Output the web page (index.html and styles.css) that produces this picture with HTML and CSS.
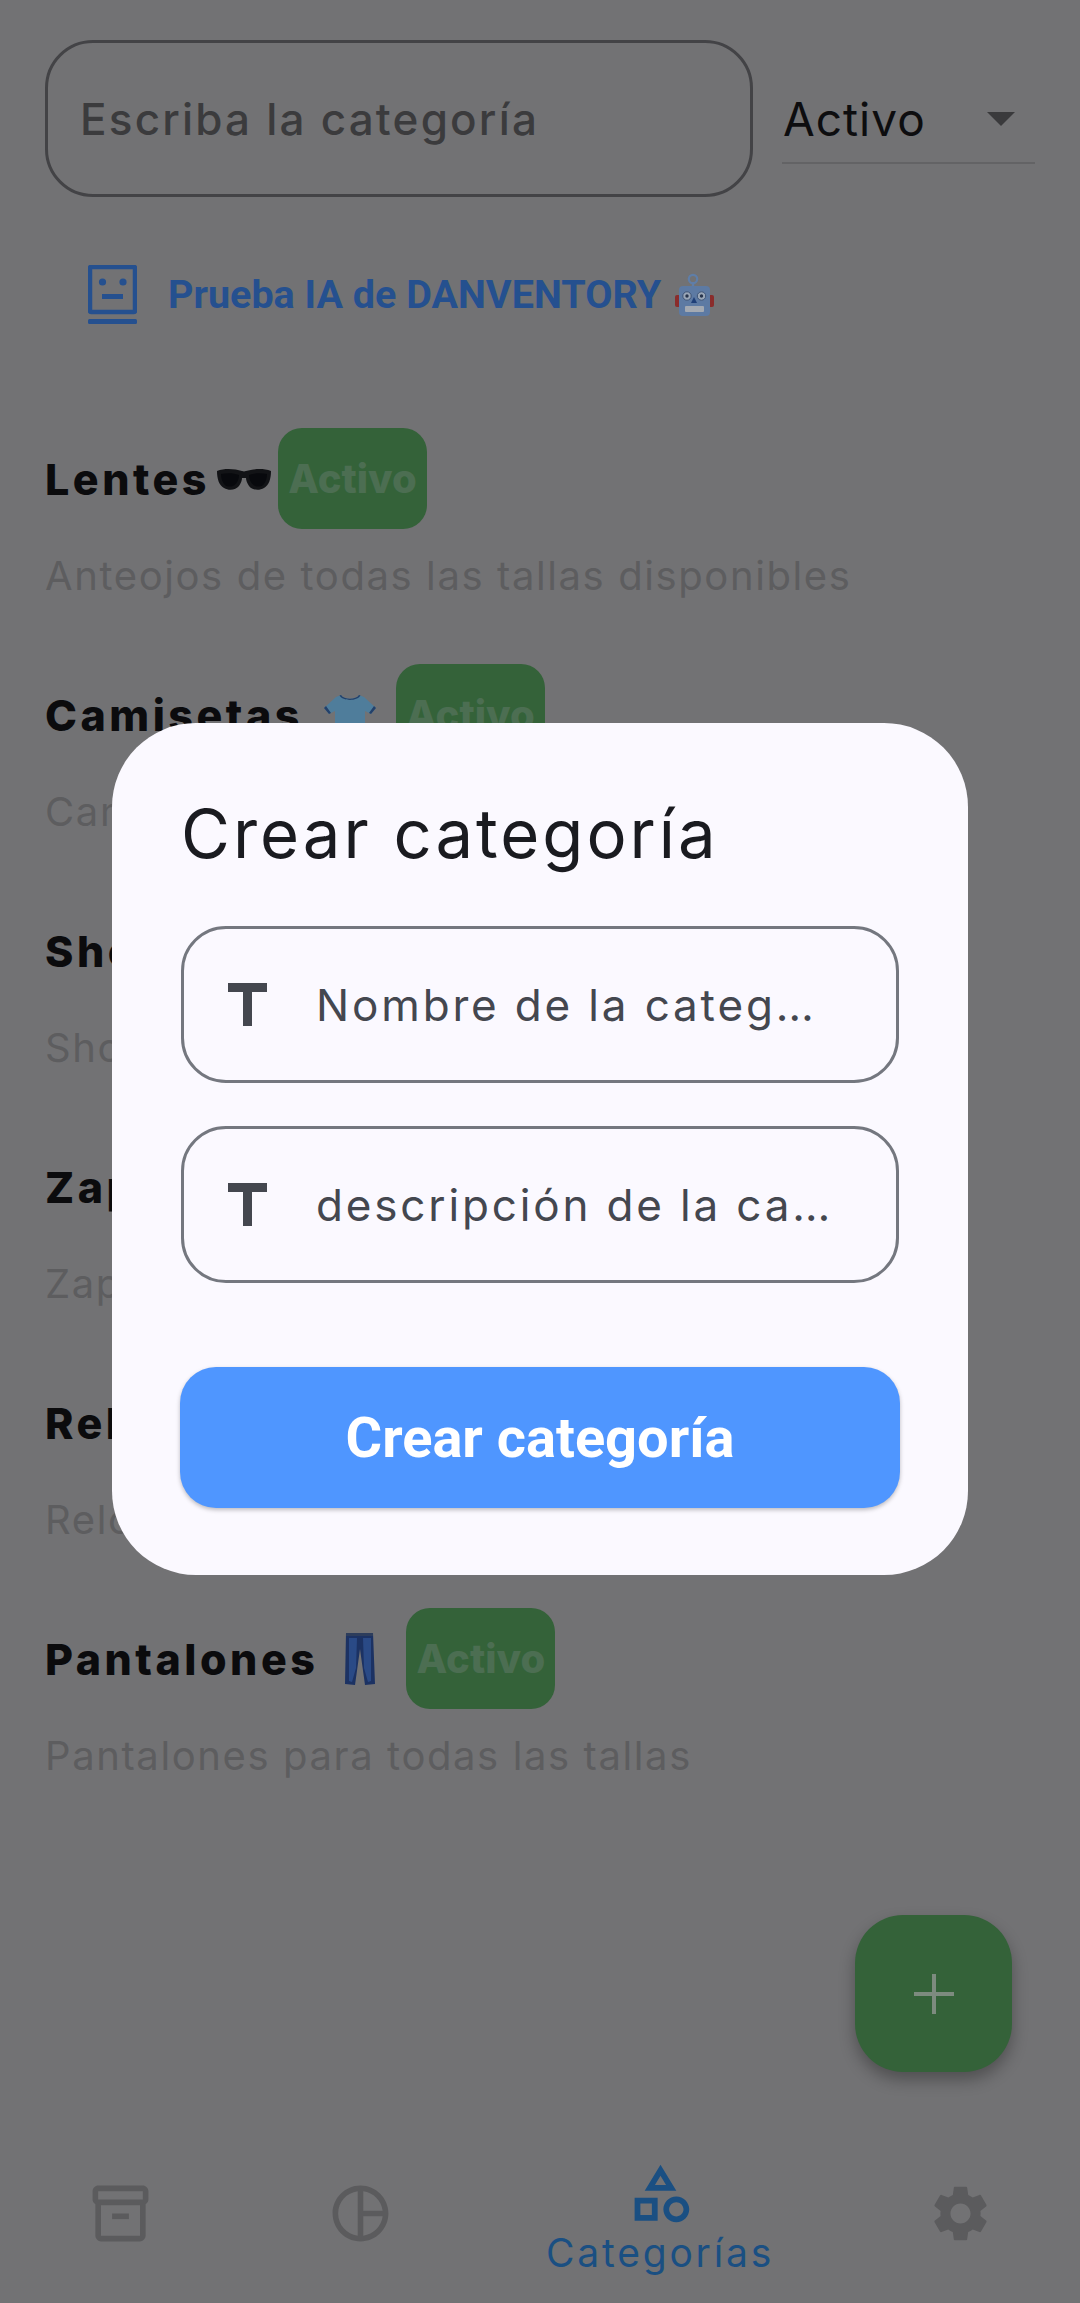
FILE: index.html
```html
<!DOCTYPE html>
<html lang="es">
<head>
    <meta charset="UTF-8">
    <meta name="viewport" content="width=device-width, initial-scale=1.0">
    <title>Categorías</title>
    <link rel="stylesheet" href="styles.css">
</head>
<body>

<div class="page">
    <div class="top-bar">
        <div class="search-box">Escriba la categoría</div>
        <div class="status-select">
            <span>Activo</span>
            <div class="select-arrow"></div>
        </div>
    </div>

    <div class="ai-row">
        <svg class="ai-icon" viewBox="0 0 49 59">
            <rect x="2" y="2" width="45" height="45" fill="none" stroke="currentColor" stroke-width="4.5" rx="1"/>
            <circle cx="14.5" cy="17" r="3.6" fill="currentColor"/>
            <circle cx="35" cy="17" r="3.6" fill="currentColor"/>
            <rect x="14" y="29" width="21" height="5" fill="currentColor"/>
            <rect x="0" y="54" width="49" height="5" rx="1.5" fill="currentColor"/>
        </svg>
        <span class="ai-text">Prueba IA de DANVENTORY</span>
        <svg class="robot" viewBox="0 0 39 43">
            <circle cx="18" cy="6" r="4.2" fill="none" stroke="#5f7ea8" stroke-width="2.2"/>
            <rect x="16.8" y="9" width="2.4" height="5" fill="#5f7ea8"/>
            <rect x="0" y="22" width="6" height="12" rx="2" fill="#8a2c2b"/>
            <rect x="33" y="22" width="6" height="12" rx="2" fill="#8a2c2b"/>
            <rect x="4" y="13" width="31" height="30" rx="4" fill="#5d7aa3"/>
            <circle cx="12" cy="23" r="4.2" fill="#9aa7b8" stroke="#3f5476" stroke-width="1"/>
            <circle cx="12" cy="23" r="1.7" fill="#27344c"/>
            <circle cx="26.5" cy="23" r="4.2" fill="#9aa7b8" stroke="#3f5476" stroke-width="1"/>
            <circle cx="26.5" cy="23" r="1.7" fill="#27344c"/>
            <path d="M19 24l3 6h-6z" fill="#1f3f78"/>
            <rect x="10" y="33" width="19" height="6" rx="1" fill="#a3a9b2"/>
        </svg>
    </div>

    <div class="category-list">
        <div class="category-row">
            <div class="category-head">
                <span class="category-name">Lentes</span>
                <svg class="emoji glasses" viewBox="0 0 54 22">
                    <path d="M0 3C8 0 18 1 25 3c2 .6 2 .6 4 0C36 1 46 0 54 3c0 8-2 14-7 17-5 3-12 2-15-2-2-3-3-6-3-8h-4c0 2-1 5-3 8-3 4-10 5-15 2C2 17 0 11 0 3z" fill="#121316"/>
                    <path d="M4 6c6-1 13-1 18 1 0 4-2 9-6 11-3 1-7 1-9-2-2-3-3-6-3-10zM50 6c-6-1-13-1-18 1 0 4 2 9 6 11 3 1 7 1 9-2 2-3 3-6 3-10z" fill="#08090d"/>
                </svg>
                <span class="status-pill">Activo</span>
            </div>
            <div class="category-desc">Anteojos de todas las tallas disponibles</div>
        </div>

        <div class="category-row">
            <div class="category-head">
                <span class="category-name">Camisetas</span>
                <svg class="emoji shirt" viewBox="0 0 52 46">
                    <path d="M17 0c3 5 15 5 18 0l5 2 12 11-5 6-6-3v30H11V16l-6 3-5-6L12 2z" fill="#4f7d9b"/>
                    <path d="M17 0c3 5 15 5 18 0l1.500 .6C33 6.500 19 6.500 15.500 .6z" fill="#23406a"/>
                    <path d="M0 13l5 6 2-1-5-7zM52 13l-5 6-2-1 5-7z" fill="#23406a"/>
                </svg>
                <span class="status-pill">Activo</span>
            </div>
            <div class="category-desc">Camisetas de todas las tallas</div>
        </div>

        <div class="category-row">
            <div class="category-head">
                <span class="category-name">Shorts</span>
                <span class="status-pill">Activo</span>
            </div>
            <div class="category-desc">Shorts para todas las tallas</div>
        </div>

        <div class="category-row">
            <div class="category-head">
                <span class="category-name">Zapatos</span>
                <span class="status-pill">Activo</span>
            </div>
            <div class="category-desc">Zapatos de todas las tallas</div>
        </div>

        <div class="category-row">
            <div class="category-head">
                <span class="category-name">Relojes</span>
                <span class="status-pill">Activo</span>
            </div>
            <div class="category-desc">Relojes de todas las marcas</div>
        </div>

        <div class="category-row">
            <div class="category-head">
                <span class="category-name">Pantalones</span>
                <svg class="emoji jeans" viewBox="0 0 30 52">
                    <path d="M1 0h27l2 51-10 1-5-36-5 36-10-1z" fill="#1c3263"/>
                    <path d="M4 5h8l-1 30-4 14-3-1zM26 5h-8l1 30 4 14 3-1z" fill="#2a4a86"/>
                    <path d="M1 0h27v3H1z" fill="#2d3d5c"/>
                </svg>
                <span class="status-pill">Activo</span>
            </div>
            <div class="category-desc">Pantalones para todas las tallas</div>
        </div>
    </div>

    <button class="fab">
        <svg viewBox="0 0 40 40" width="40" height="40"><path d="M18 0h4v18h18v4H22v18h-4V22H0v-4h18z" fill="currentColor"/></svg>
    </button>

    <nav class="bottom-nav">
        <div class="nav-item">
            <svg class="nav-icon" viewBox="0 0 24 24"><path d="M20 2H4c-1 0-2 .9-2 2v3.01c0 .72.43 1.34 1 1.69V20c0 1.1 1.1 2 2 2h14c.9 0 2-.9 2-2V8.7c.57-.35 1-.97 1-1.69V4c0-1.1-1-2-2-2zm-1 18H5V9h14v11zm1-13H4V4h16v3z"/><path d="M9 12h6v2H9z"/></svg>
        </div>
        <div class="nav-item">
            <svg class="nav-icon" viewBox="0 0 24 24"><path d="M12 2C6.49 2 2 6.49 2 12s4.49 10 10 10 10-4.49 10-10S17.51 2 12 2zm1 2.07c3.61.45 6.48 3.33 6.93 6.93H13V4.07zM4 12c0-4.06 3.07-7.44 7-7.93v15.87c-3.93-.5-7-3.88-7-7.94zm9 7.93V13h6.93c-.45 3.61-3.32 6.48-6.93 6.93z"/></svg>
        </div>
        <div class="nav-item selected">
            <svg class="nav-icon" viewBox="0 0 24 24"><path d="M12 2l-5.5 9h11L12 2zm0 3.84L13.93 9h-3.87L12 5.84zM17.5 13c-2.49 0-4.5 2.01-4.5 4.5s2.01 4.5 4.5 4.5 4.5-2.01 4.5-4.5-2.01-4.5-4.5-4.5zm0 7c-1.38 0-2.5-1.12-2.5-2.5s1.12-2.5 2.5-2.5 2.5 1.12 2.5 2.5-1.12 2.5-2.5 2.5zM3 21.5h8v-8H3v8zm2-6h4v4H5v-4z"/></svg>
            <span class="nav-label">Categorías</span>
        </div>
        <div class="nav-item">
            <svg class="nav-icon" viewBox="0 0 24 24"><path d="M19.14 12.94c.04-.3.06-.61.06-.94 0-.32-.02-.64-.07-.94l2.03-1.58c.18-.14.23-.41.12-.61l-1.92-3.32c-.12-.22-.37-.29-.59-.22l-2.39.96c-.5-.38-1.03-.7-1.62-.94l-.36-2.54c-.04-.24-.24-.41-.48-.41h-3.84c-.24 0-.43.17-.47.41l-.36 2.54c-.59.24-1.13.57-1.62.94l-2.39-.96c-.22-.08-.47 0-.59.22L2.74 8.87c-.12.21-.08.47.12.61l2.03 1.58c-.05.3-.09.63-.09.94s.02.64.07.94l-2.03 1.58c-.18.14-.23.41-.12.61l1.92 3.32c.12.22.37.29.59.22l2.39-.96c.5.38 1.03.7 1.62.94l.36 2.54c.05.24.24.41.48.41h3.84c.24 0 .44-.17.47-.41l.36-2.54c.59-.24 1.13-.56 1.62-.94l2.39.96c.22.08.47 0 .59-.22l1.92-3.32c.12-.22.07-.47-.12-.61l-2.01-1.58zM12 15.6c-1.98 0-3.6-1.62-3.6-3.6s1.62-3.6 3.6-3.6 3.6 1.62 3.6 3.6-1.62 3.6-3.6 3.6z"/></svg>
        </div>
    </nav>

    <div class="dialog-layer">
        <div class="dialog">
            <h2 class="dialog-title">Crear categoría</h2>
            <div class="dialog-input">
                <svg class="input-icon" viewBox="0 0 39 43"><path d="M0 0h39v9H24v34h-9V9H0z"/></svg>
                <span class="input-hint">Nombre de la categ…</span>
            </div>
            <div class="dialog-input">
                <svg class="input-icon" viewBox="0 0 39 43"><path d="M0 0h39v9H24v34h-9V9H0z"/></svg>
                <span class="input-hint">descripción de la ca…</span>
            </div>
            <button class="dialog-button">Crear categoría</button>
        </div>
    </div>
</div>

</body>
</html>
```

FILE: styles.css
```css
* {
    box-sizing: border-box;
}

body {
    margin: 0;
    font-family: Inter, "Noto Sans", sans-serif;
    background-color: #727274;
}

.page {
    position: relative;
    height: 100vh;
    display: flex;
    flex-direction: column;
    overflow: hidden;
}

/* search + dropdown */
.top-bar {
    display: flex;
    padding: 40px 45px 0;
    gap: 29px;
}

.search-box {
    width: 708px;
    height: 157px;
    border: 3px solid #434346;
    border-radius: 48px;
    display: flex;
    align-items: center;
    padding-left: 32px;
    font-size: 44px;
    font-weight: 500;
    letter-spacing: 2.2px;
    color: #3b3b3d;
}

.status-select {
    width: 253px;
    height: 124px;
    border-bottom: 2px solid #636365;
    display: flex;
    align-items: center;
    justify-content: space-between;
    padding: 36px 20px 0 1px;
    font-size: 46px;
    letter-spacing: 1px;
    color: #0d0d0f;
}

.select-arrow {
    width: 0;
    height: 0;
    border-left: 14px solid transparent;
    border-right: 14px solid transparent;
    border-top: 14px solid #3a3a3c;
}

/* AI link */
.ai-row {
    display: flex;
    align-items: center;
    margin-top: 68px;
    padding-left: 88px;
    color: #25508f;
}

.ai-icon {
    width: 49px;
    height: 59px;
}

.ai-text {
    margin-left: 31px;
    font-family: Roboto, sans-serif;
    font-weight: 700;
    font-size: 39.5px;
}

.robot {
    width: 39px;
    height: 43px;
    margin-left: 14px;
}

/* list */
.category-list {
    margin-top: 104px;
    padding-left: 45px;
}

.category-row {
    height: 236px;
}

.category-head {
    display: flex;
    align-items: center;
    height: 101px;
}

.category-name {
    font-weight: 800;
    font-size: 43px;
    letter-spacing: 3.5px;
    color: #0b0b0d;
}

.emoji {
    flex-shrink: 0;
}

.glasses {
    width: 54px;
    height: 22px;
    margin: 0 7px 0 7px;
}

.shirt {
    width: 52px;
    height: 46px;
    margin: 6px 20px 0 21px;
}

.jeans {
    width: 30px;
    height: 52px;
    margin: 0 31px 0 27px;
}

.status-pill {
    width: 149px;
    height: 101px;
    border-radius: 24px;
    background-color: #346239;
    color: #4c6e52;
    font-weight: 800;
    font-size: 40px;
    display: flex;
    align-items: center;
    justify-content: center;
}

.category-desc {
    margin-top: 23px;
    font-size: 40px;
    line-height: 48px;
    letter-spacing: 1.6px;
    color: #5d5d5f;
}

/* floating button */
.fab {
    position: absolute;
    left: 855px;
    top: 1915px;
    width: 157px;
    height: 157px;
    border: none;
    border-radius: 48px;
    background-color: #346239;
    color: #7d8b7f;
    box-shadow: 0 8px 16px rgba(0, 0, 0, 0.3);
    display: flex;
    align-items: center;
    justify-content: center;
}

/* bottom navigation */
.bottom-nav {
    margin-top: auto;
    height: 180px;
    display: grid;
    grid-template-columns: 240px 240px 360px 240px;
    color: #5b5b5d;
}

.nav-item {
    display: flex;
    flex-direction: column;
    align-items: center;
    justify-content: center;
}

.nav-icon {
    width: 67px;
    height: 67px;
    fill: currentColor;
}

.selected {
    color: #1a4f82;
    padding-top: 10px;
}

.selected .nav-icon {
    width: 69px;
    height: 69px;
}

.nav-label {
    font-size: 39px;
    line-height: 50px;
    letter-spacing: 2.8px;
}

/* dialog */
.dialog-layer {
    position: absolute;
    inset: 0;
    display: flex;
    align-items: center;
    justify-content: center;
    padding-bottom: 5px;
}

.dialog {
    width: 856px;
    height: 852px;
    padding: 66px 69px 0;
    border-radius: 84px;
    background-color: #fbf9ff;
}

.dialog-title {
    margin: 0 0 47px;
    font-weight: 400;
    font-size: 67px;
    line-height: 90px;
    letter-spacing: 3px;
    color: #1a1b20;
}

.dialog-input {
    height: 157px;
    margin-bottom: 43px;
    border: 3px solid #74777f;
    border-radius: 45px;
    display: flex;
    align-items: center;
    padding-left: 44px;
}

.input-icon {
    width: 39px;
    height: 43px;
    fill: #44474f;
    flex-shrink: 0;
}

.input-hint {
    margin-left: 49px;
    font-size: 44px;
    letter-spacing: 2.85px;
    color: #44474f;
    white-space: nowrap;
}

.dialog-button {
    display: block;
    width: 720px;
    height: 141px;
    margin: 84px 0 0 -1px;
    border: none;
    border-radius: 36px;
    background-color: #4f96ff;
    color: #fff;
    font-family: Roboto, sans-serif;
    font-weight: 700;
    font-size: 56px;
    box-shadow: 0 2px 4px rgba(0, 0, 0, 0.25);
}
```
